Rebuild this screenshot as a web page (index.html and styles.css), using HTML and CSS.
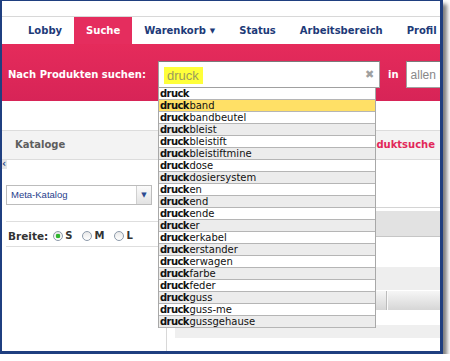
FILE: index.html
```html
<!DOCTYPE html>
<html lang="de">
<head>
  <meta charset="UTF-8" />
  <title>Suche</title>
  <link rel="stylesheet" href="styles.css">
</head>
<body>
  <div class="window">
    <div class="topbar"></div>

    <ul class="nav">
      <li>Lobby</li>
      <li class="active">Suche</li>
      <li>Warenkorb<span class="caret">▼</span></li>
      <li>Status</li>
      <li>Arbeitsbereich</li>
      <li>Profil</li>
    </ul>

    <div class="searchbar">
      <label class="search-label">Nach Produkten suchen:</label>
      <div class="field query">
        <span class="typed">druck</span>
        <span class="clear">✖</span>
      </div>
      <span class="in">in</span>
      <div class="field scope">allen Katalogen</div>
    </div>

    <div class="main">
      <aside class="side">
        <div class="panel-head">Kataloge</div>
        <span class="collapse">‹</span>
        <div class="select">
          <span class="select-text">Meta-Katalog</span>
          <span class="select-btn">▼</span>
        </div>
        <div class="width-row">
          <span class="width-label">Breite:</span>
          <span class="opt"><span class="radio on"></span>S</span>
          <span class="opt"><span class="radio"></span>M</span>
          <span class="opt"><span class="radio"></span>L</span>
        </div>
      </aside>

      <section class="content">
        <div class="panel-head hl">Produktsuche</div>
        <div class="results">
          <div class="bar"></div>
          <div class="stripe"></div>
          <div class="toolbar"><span class="cell"></span></div>
          <div class="foot"></div>
        </div>
      </section>
    </div>

    <ul class="suggest">
      <li><b>druck</b></li>
      <li class="active"><b>druck</b>band</li>
      <li><b>druck</b>bandbeutel</li>
      <li><b>druck</b>bleist</li>
      <li><b>druck</b>bleistift</li>
      <li><b>druck</b>bleistiftmine</li>
      <li><b>druck</b>dose</li>
      <li><b>druck</b>dosiersystem</li>
      <li><b>druck</b>en</li>
      <li><b>druck</b>end</li>
      <li><b>druck</b>ende</li>
      <li><b>druck</b>er</li>
      <li><b>druck</b>erkabel</li>
      <li><b>druck</b>erstander</li>
      <li><b>druck</b>erwagen</li>
      <li><b>druck</b>farbe</li>
      <li><b>druck</b>feder</li>
      <li><b>druck</b>guss</li>
      <li><b>druck</b>guss-me</li>
      <li><b>druck</b>gussgehause</li>
    </ul>
  </div>
</body>
</html>
```

FILE: styles.css
```css
* { box-sizing: border-box; }

body {
  margin: 0;
  background: #fff;
  font-family: 'DejaVu Sans', Verdana, sans-serif;
  font-size: 10px;
}

.window {
  position: relative;
  width: 443px;
  height: 354px;
  border: 2px solid #1f3f80;
  border-top-width: 1px;
  border-right-width: 3px;
  border-bottom-width: 3px;
  background: #fff;
  overflow: hidden;
  box-shadow: 4px 4px 4px rgba(0, 0, 0, 0.5);
}

.topbar {
  height: 16px;
  border-bottom: 1px solid #d8d8d8;
}

/* main navigation */
.nav {
  display: flex;
  margin: 0;
  padding: 0 0 0 14px;
  list-style: none;
  height: 27px;
}

.nav li {
  padding: 0 12px;
  line-height: 28px;
  font-weight: bold;
  color: #1d3a78;
  white-space: nowrap;
}

.nav li.active {
  background: #e52d5e;
  color: #fff;
}

.caret {
  font-size: 7px;
  margin-left: 4px;
  vertical-align: 1px;
}

/* search band */
.searchbar {
  display: flex;
  align-items: center;
  height: 57px;
  padding: 17px 0 13px 6px;
  background: linear-gradient(#e52b5b, #d72457);
  color: #fff;
  font-weight: bold;
}

.search-label {
  width: 150px;
  flex: none;
}

.field {
  height: 27px;
  background: #fff;
  border: 1px solid #a0a0a0;
  border-top-color: #7a7a7a;
  display: flex;
  align-items: center;
  font-family: 'Liberation Sans', Arial, sans-serif;
  font-weight: normal;
  flex: none;
}

.query {
  width: 222px;
  padding: 0 5px;
}

.typed {
  background: #ffff3a;
  color: #9b9b5c;
  font-size: 13px;
  line-height: 17px;
  padding: 0 4px 0 3px;
  margin-top: 1px;
}

.clear {
  margin-left: auto;
  color: #a0a0a0;
  font-size: 11px;
}

.in {
  margin: 0 7px 0 8px;
}

.scope {
  width: 120px;
  padding-left: 4px;
  color: #888;
  font-size: 12px;
}

/* lower area */
.main {
  display: flex;
  height: 250px;
}

.side {
  position: relative;
  width: 164px;
  flex: none;
  padding-top: 29px;
}

.panel-head {
  height: 30px;
  border-top: 1px solid #dcdcdc;
  border-bottom: 1px solid #dcdcdc;
  background: #f3f3f3;
  line-height: 28px;
  font-weight: bold;
  color: #5e5e5e;
  padding-left: 13px;
}

.panel-head.hl {
  color: #e2285a;
  text-align: right;
  padding-right: 5px;
  white-space: nowrap;
  overflow: hidden;
}

.collapse {
  position: absolute;
  left: 0;
  top: 59px;
  width: 5px;
  height: 9px;
  background: #e6e6e6;
  color: #2a4a8c;
  font-size: 10px;
  font-weight: bold;
  line-height: 8px;
}

.select {
  display: flex;
  width: 146px;
  height: 20px;
  margin: 25px 0 0 4px;
  border: 1px solid #bcbcbc;
  background: #fff;
}

.select-text {
  padding-left: 4px;
  line-height: 18px;
  font-family: 'Liberation Sans', Arial, sans-serif;
  font-size: 9.5px;
  color: #1f3e8c;
}

.select-btn {
  margin-left: auto;
  width: 15px;
  border-left: 1px solid #d0d0d0;
  background: linear-gradient(#fbfbfb, #e2e2e2);
  color: #2a4a90;
  font-size: 7px;
  line-height: 18px;
  text-align: center;
}

.width-row {
  display: flex;
  align-items: center;
  margin: 16px 0 0 4px;
  height: 26px;
  padding: 3px 0 0 2px;
  border-top: 1px solid #dedede;
  border-bottom: 1px solid #dedede;
  font-weight: bold;
  color: #333;
}

.width-label {
  font-size: 10.5px;
  margin-right: 5px;
}

.opt {
  display: inline-flex;
  align-items: center;
  gap: 2px;
  margin-right: 10px;
}

.radio {
  width: 10px;
  height: 10px;
  border: 1px solid #8c9aaa;
  border-radius: 50%;
  background: linear-gradient(#e8e8e8, #fff);
}

.radio.on {
  background: radial-gradient(circle, #2fb52f 0 2px, transparent 2.6px), linear-gradient(#e8e8e8, #fff);
}

.content {
  flex: 1;
  min-width: 0;
  border-left: 1px solid #d8d8d8;
  padding-top: 29px;
}

.results {
  margin-top: 47px;
  border-top: 1px solid #d4d4d4;
}

.bar {
  margin-top: 3px;
  height: 26px;
  background: #e2e2e2;
  border-bottom: 1px solid #c6c6c6;
}

.stripe {
  margin-top: 30px;
  height: 23px;
  background: #eeeeee;
}

.toolbar {
  margin-top: 1px;
  height: 19px;
  background: linear-gradient(#f6f6f6, #d6d6d6);
  display: flex;
}

.cell {
  width: 220px;
  border-right: 1px solid #bcbcbc;
  box-shadow: 1px 0 0 #fafafa;
}

.foot {
  margin: 15px 0 0 8px;
  height: 13px;
  background: #efefef;
}

/* autocomplete list */
.suggest {
  position: absolute;
  left: 156px;
  top: 87px;
  width: 218px;
  margin: 0;
  padding: 0;
  list-style: none;
  border-left: 1px solid #a8a8a8;
  border-right: 1px solid #a8a8a8;
  background: #fff;
}

.suggest li {
  height: 12px;
  padding-left: 1px;
  border-bottom: 1px solid #b5b5b5;
  line-height: 11px;
  color: #111;
  white-space: nowrap;
}

.suggest li:nth-child(even) {
  background: #ececec;
}

.suggest li.active {
  background: #ffe066;
}

.suggest b {
  letter-spacing: -0.6px;
  margin-right: 0.6px;
}
```
